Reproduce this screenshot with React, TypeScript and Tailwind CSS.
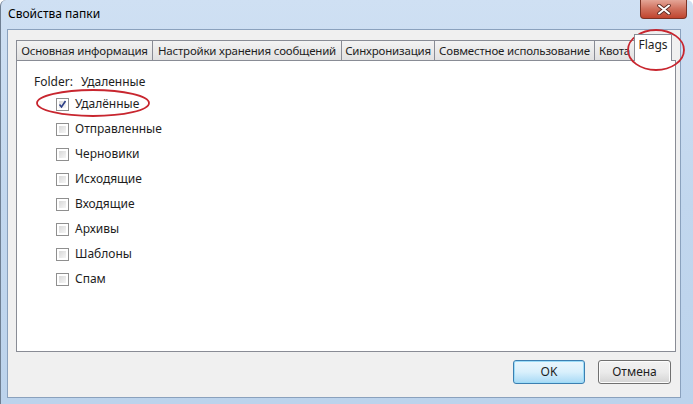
import React from 'react';

const tabs = [
  { label: 'Основная информация', w: 137 },
  { label: 'Настройки хранения сообщений', w: 190 },
  { label: 'Синхронизация', w: 94 },
  { label: 'Совместное использование', w: 161 },
  { label: 'Квота', w: 41 },
];

const folders = ['Удалённые', 'Отправленные', 'Черновики', 'Исходящие', 'Входящие', 'Архивы', 'Шаблоны', 'Спам'];

const CheckBox: React.FC<{ checked?: boolean }> = ({ checked }) => (
  <div className="w-[13px] h-[13px] border border-[#8f8f8f] bg-white p-[2px] shrink-0">
    <div className="w-full h-full bg-gradient-to-br from-[#d9d9d9] to-[#f6f6f6] relative">
      {checked && (
        <svg className="absolute -left-[1px] -top-[1px]" width="9" height="9" viewBox="0 0 9 9">
          <path d="M1.5 4.5 L3.5 7 L7.5 1" fill="none" stroke="#2c3f87" strokeWidth="1.6" />
        </svg>
      )}
    </div>
  </div>
);

const App: React.FC = () => {
  return (
    <div
      className="w-[693px] h-[404px] relative overflow-hidden flex flex-col bg-gradient-to-b from-[#cfe0f3] via-[#c2d7ee] to-[#bcd3ec] rounded-t-[6px] border-l border-[#6f7f92] text-[12px] text-[#1e1e1e]"
      style={{ fontFamily: '"Noto Sans", "Open Sans", sans-serif' }}
    >
      {/* title bar */}
      <div className="h-[29px] flex items-start shrink-0">
        <div className="pl-[7px] pt-[5px] text-[12px] text-black">Свойства папки</div>
        <div className="ml-auto mr-[6px] w-[47px] h-[19px] rounded-b-[4px] border border-t-0 border-[#7b3326] bg-gradient-to-b from-[#e4a597] via-[#cf6f5c] to-[#c0442e] flex items-center justify-center">
          <svg width="14" height="11" viewBox="0 0 14 11">
            <path d="M2 1.5 L12 9.5 M12 1.5 L2 9.5" stroke="#5a2a22" strokeWidth="3.6" strokeLinecap="round" />
            <path d="M2 1.5 L12 9.5 M12 1.5 L2 9.5" stroke="#ffffff" strokeWidth="2" strokeLinecap="round" />
          </svg>
        </div>
      </div>

      {/* client area */}
      <div className="flex-1 ml-[6px] mr-[12px] mb-[6px] border border-[#8aa1bd] bg-[#f0f0f0] flex flex-col pl-[8px] pr-[4px] pt-[3px]">
        {/* tab strip */}
        <div className="flex items-end h-[27px]">
          {tabs.map((t) => (
            <div
              key={t.label}
              style={{ width: t.w }}
              className="h-[20px] -mr-[1px] border border-b-0 border-[#898c95] bg-gradient-to-b from-[#f3f3f3] to-[#e1e1e1] flex items-center justify-center whitespace-nowrap overflow-hidden text-[11.5px] tracking-[-0.2px] leading-none"
            >
              {t.label}
            </div>
          ))}
          <div className="w-[38px] h-[27px] -mb-[1px] border border-b-0 border-[#898c95] bg-white flex items-start justify-center pt-[4px] whitespace-nowrap leading-none relative z-10">
            Flags
          </div>
        </div>

        {/* tab panel */}
        <div className="w-[660px] h-[292px] border border-[#898c95] bg-white pt-[14px] pl-[17px]">
          <div className="flex items-center leading-none h-[14px]">
            <span className="w-[47px]">Folder:</span>
            <span>Удаленные</span>
          </div>
          <div className="flex flex-col pl-[22px] pt-[3px]">
            {folders.map((f, i) => (
              <div key={f} className="h-[25px] flex items-center gap-[6px] leading-none">
                <CheckBox checked={i === 0} />
                <span className="-mt-[1px]">{f}</span>
              </div>
            ))}
          </div>
        </div>

        {/* buttons */}
        <div className="flex justify-end gap-[13px] pt-[8px] pr-[5px]">
          <button className="w-[72px] h-[24px] rounded-[3px] border border-[#3c7fb1] bg-gradient-to-b from-[#eaf6fd] via-[#d9f0fc] to-[#a7d9f5] shadow-[inset_0_0_0_1px_#9cdcf8] leading-none">
            OK
          </button>
          <button className="w-[73px] h-[24px] rounded-[3px] border border-[#707070] bg-gradient-to-b from-[#f2f2f2] via-[#ebebeb] to-[#d4d4d4] shadow-[inset_0_0_0_1px_#fcfcfc] leading-none">
            Отмена
          </button>
        </div>
      </div>

      {/* red annotation ellipses */}
      <svg className="absolute left-0 top-0 pointer-events-none" width="693" height="404">
        <ellipse cx="92" cy="103" rx="56" ry="13" fill="none" stroke="#c8262f" strokeWidth="1.8" />
        <ellipse cx="655" cy="50" rx="28" ry="20" fill="none" stroke="#c8262f" strokeWidth="1.8" />
      </svg>
    </div>
  );
};

export default App;
